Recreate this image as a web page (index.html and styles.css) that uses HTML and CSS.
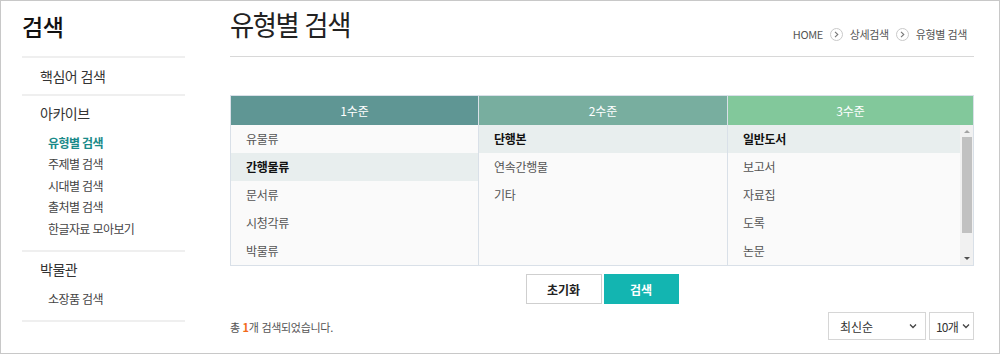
FILE: index.html
```html
<!DOCTYPE html>
<html lang="ko">
<head>
<meta charset="utf-8">
<title>유형별 검색</title>
<link rel="stylesheet" href="styles.css">
</head>
<body>
<div class="page">
  <aside class="side">
    <h1 class="side-title">검색</h1>
    <div class="group single"><a class="group-head">핵심어 검색</a></div>
    <div class="group">
      <div class="group-head">아카이브</div>
      <ul class="sub">
        <li class="on">유형별 검색</li>
        <li>주제별 검색</li>
        <li>시대별 검색</li>
        <li>출처별 검색</li>
        <li>한글자료 모아보기</li>
      </ul>
    </div>
    <div class="group">
      <div class="group-head">박물관</div>
      <ul class="sub">
        <li>소장품 검색</li>
      </ul>
    </div>
  </aside>
  <main class="main">
    <header class="head">
      <h2 class="title">유형별 검색</h2>
      <nav class="crumbs">
        <span>HOME</span>
        <span class="arr"><svg width="5" height="7" viewBox="0 0 5 7"><path d="M1 0.8 L3.8 3.5 L1 6.2" fill="none" stroke="#777" stroke-width="1.1"/></svg></span>
        <span>상세검색</span>
        <span class="arr"><svg width="5" height="7" viewBox="0 0 5 7"><path d="M1 0.8 L3.8 3.5 L1 6.2" fill="none" stroke="#777" stroke-width="1.1"/></svg></span>
        <span>유형별 검색</span>
      </nav>
    </header>
    <div class="levels">
      <div class="col">
        <div class="col-head c1">1수준</div>
        <div class="col-body">
          <ul class="list">
            <li>유물류</li>
            <li class="sel">간행물류</li>
            <li>문서류</li>
            <li>시청각류</li>
            <li>박물류</li>
          </ul>
        </div>
      </div>
      <div class="col">
        <div class="col-head c2">2수준</div>
        <div class="col-body">
          <ul class="list">
            <li class="sel">단행본</li>
            <li>연속간행물</li>
            <li>기타</li>
          </ul>
        </div>
      </div>
      <div class="col">
        <div class="col-head c3">3수준</div>
        <div class="col-body">
          <ul class="list">
            <li class="sel">일반도서</li>
            <li>보고서</li>
            <li>자료집</li>
            <li>도록</li>
            <li>논문</li>
          </ul>
          <div class="scroll">
            <span class="sarrow up"></span>
            <div class="track"><div class="thumb"></div></div>
            <span class="sarrow down"></span>
          </div>
        </div>
      </div>
    </div>
    <div class="actions">
      <button class="btn reset">초기화</button>
      <button class="btn search">검색</button>
    </div>
    <div class="result">
      <p class="count">총 <b>1</b>개 검색되었습니다.</p>
      <div class="selects">
        <div class="select wide"><span>최신순</span><svg width="8" height="6" viewBox="0 0 8 6"><path d="M1 1.5 L4 4.5 L7 1.5" fill="none" stroke="#444" stroke-width="1.3"/></svg></div>
        <div class="select narrow"><span>10개</span><svg width="8" height="6" viewBox="0 0 8 6"><path d="M1 1.5 L4 4.5 L7 1.5" fill="none" stroke="#444" stroke-width="1.3"/></svg></div>
      </div>
    </div>
  </main>
</div>
</body>
</html>
```

FILE: styles.css
```css
* { box-sizing: border-box; }
html, body { margin: 0; padding: 0; background: #fff; }
body {
  font-family: "Noto Sans CJK KR", "Noto Sans", sans-serif;
  color: #333;
}
ul { list-style: none; margin: 0; padding: 0; }
h1, h2, p { margin: 0; }

.page {
  width: 1000px;
  height: 354px;
  border: 1px solid #c8c8c8;
  display: flex;
  gap: 45px;
  padding: 0 25px 0 21px;
  overflow: hidden;
}

/* sidebar */
.side { width: 163px; flex: none; }
.side-title {
  height: 57px;
  border-bottom: 2px solid #efefef;
  font-size: 23px;
  font-weight: 500;
  line-height: 50px;
  color: #111;
  letter-spacing: -0.5px;
}
.group {
  border-bottom: 2px solid #efefef;
  padding: 7px 0 11px 18px;
}
.group.single { height: 38px; padding: 0 0 0 18px; }
.group.single .group-head { line-height: 36px; display: block; }
.group-head {
  font-size: 14px;
  line-height: 20px;
  color: #333;
  letter-spacing: -0.5px;
}
.sub { margin-top: 9px; padding-left: 8px; }
.sub li {
  font-size: 12px;
  line-height: 21.4px;
  color: #444;
  letter-spacing: -0.6px;
}
.sub li.on { color: #1a8a89; font-weight: 700; }

/* main */
.main { flex: 1; min-width: 0; }
.head {
  height: 56px;
  border-bottom: 1px solid #d8d8d8;
  display: flex;
  justify-content: space-between;
  align-items: flex-start;
}
.title {
  font-size: 28px;
  font-weight: 400;
  line-height: 40px;
  margin-top: 3px;
  letter-spacing: -1.5px;
  color: #222;
  transform: scaleX(0.94);
  transform-origin: left center;
  white-space: nowrap;
}
.crumbs {
  margin-top: 25px;
  margin-right: 7px;
  display: flex;
  align-items: center;
  gap: 7px;
  font-size: 11px;
  line-height: 16px;
  color: #555;
  letter-spacing: -0.4px;
}
.crumbs .arr {
  width: 13px;
  height: 13px;
  border: 1px solid #c9c9c9;
  border-radius: 50%;
  display: flex;
  align-items: center;
  justify-content: center;
}

.levels {
  margin-top: 38px;
  display: grid;
  grid-template-columns: 248px 249px 1fr;
  border: 1px solid #d9e0e8;
}
.col { border-right: 1px solid #d9e0e8; min-width: 0; }
.col:last-child { border-right: none; }
.col-head {
  height: 29px;
  line-height: 29px;
  text-align: center;
  color: #fff;
  font-size: 12px;
}
.c1 { background: #5f9694; }
.c2 { background: #78ae9f; }
.c3 { background: #82c89b; }
.col-body {
  height: 140px;
  background: #fafafa;
  display: flex;
}
.list { flex: 1; overflow: hidden; }
.list li {
  height: 28px;
  line-height: 28px;
  padding-left: 15px;
  font-size: 12px;
  color: #555;
  letter-spacing: -0.3px;
}
.list li.sel { background: #e8eeee; color: #111; font-weight: 700; }

.scroll {
  width: 13px;
  flex: none;
  background: #f1f1f1;
  display: flex;
  flex-direction: column;
  align-items: center;
}
.sarrow { width: 0; height: 0; border-left: 3px solid transparent; border-right: 3px solid transparent; }
.sarrow.up { border-bottom: 3px solid #a3a3a3; margin: 5px 0 4px; }
.sarrow.down { border-top: 3px solid #505050; margin: 4px 0 5px; }
.track { flex: 1; width: 100%; display: flex; justify-content: center; }
.thumb { width: 10px; height: 96px; background: #c1c1c1; }

.actions {
  display: flex;
  justify-content: center;
  gap: 2px;
  margin-top: 8px;
}
.btn {
  width: 75px;
  height: 30px;
  font-family: inherit;
  font-size: 12px;
  font-weight: 700;
  padding: 0;
  cursor: pointer;
}
.btn.reset { background: #fff; border: 1px solid #cfcfcf; color: #222; width: 76px; }
.btn.search { background: #13b5b1; border: 1px solid #13b5b1; color: #fff; }

.result {
  margin-top: 8px;
  display: flex;
  justify-content: space-between;
  align-items: center;
}
.count { font-size: 11px; color: #555; letter-spacing: -0.3px; margin-top: 2px; }
.count b { color: #f26a1b; }
.selects { display: flex; gap: 3px; }
.select {
  height: 28px;
  border: 1px solid #d6d6d6;
  background: #fff;
  display: flex;
  align-items: center;
  justify-content: space-between;
  font-size: 12px;
  color: #333;
  white-space: nowrap;
}
.select.wide { width: 98px; padding: 0 8px 0 11px; }
.select.narrow { width: 45px; padding: 0 3px 0 6px; letter-spacing: -0.8px; }
```
